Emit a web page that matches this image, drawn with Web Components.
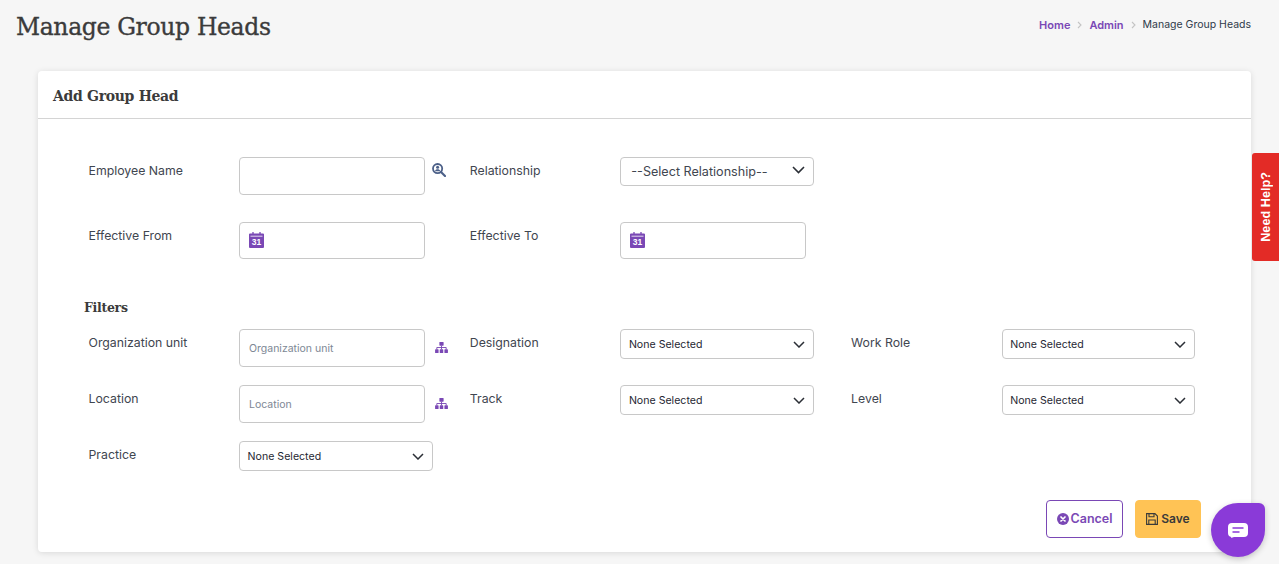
<!DOCTYPE html>
<html lang="en">
<head>
<meta charset="utf-8">
<title>Manage Group Heads</title>
<style>
  html, body { margin: 0; height: 100%; overflow: hidden; background: #f6f6f6; }
  body { font-family: Inter, "Noto Sans", sans-serif; color: #3a3f47; }
</style>
</head>
<body>
<gh-page>
  <gh-header slot="header" title="Manage Group Heads">
    <gh-crumb href>Home</gh-crumb>
    <gh-crumb href>Admin</gh-crumb>
    <gh-crumb>Manage Group Heads</gh-crumb>
  </gh-header>

  <gh-card heading="Add Group Head">
    <gh-row style="margin-bottom:27px">
      <gh-field label="Employee Name"><gh-input tall icon="search"></gh-input></gh-field>
      <gh-field label="Relationship"><gh-select big>--Select Relationship--</gh-select></gh-field>
    </gh-row>
    <gh-row>
      <gh-field label="Effective From"><gh-input date></gh-input></gh-field>
      <gh-field label="Effective To"><gh-input date></gh-input></gh-field>
    </gh-row>

    <gh-subhead>Filters</gh-subhead>

    <gh-row style="margin-bottom:18px">
      <gh-field label="Organization unit"><gh-input tall placeholder="Organization unit" icon="org"></gh-input></gh-field>
      <gh-field label="Designation"><gh-select>None Selected</gh-select></gh-field>
      <gh-field label="Work Role"><gh-select>None Selected</gh-select></gh-field>
    </gh-row>
    <gh-row style="margin-bottom:18px">
      <gh-field label="Location"><gh-input tall placeholder="Location" icon="org"></gh-input></gh-field>
      <gh-field label="Track"><gh-select>None Selected</gh-select></gh-field>
      <gh-field label="Level"><gh-select>None Selected</gh-select></gh-field>
    </gh-row>
    <gh-row>
      <gh-field label="Practice"><gh-select>None Selected</gh-select></gh-field>
    </gh-row>

    <gh-actions slot="footer">
      <gh-button kind="cancel">Cancel</gh-button>
      <gh-button kind="save">Save</gh-button>
    </gh-actions>
  </gh-card>
</gh-page>
<gh-help>Need Help?</gh-help>
<gh-chat></gh-chat>

<script>
  // small helper so every element sets up its shadow root the same way
  function shadow(el, html) {
    el.attachShadow({ mode: 'open' }).innerHTML = html;
  }

  const ICONS = {
    search: `<svg width="14" height="14" viewBox="0 0 14 14"><circle cx="5.6" cy="5.6" r="4.6" fill="none" stroke="#4c6088" stroke-width="1.8"/><circle cx="5.6" cy="4.3" r="1.5" fill="#4c6088"/><path d="M3 8.2c.3-1.5 1.3-2 2.6-2s2.3.5 2.6 2z" fill="#4c6088"/><path d="M9 9l4 4" stroke="#4c6088" stroke-width="2.2" stroke-linecap="round"/></svg>`,
    org: `<svg width="13" height="11" viewBox="0 0 14 12"><g fill="#7a48b5"><rect x="4.7" y="0" width="4.6" height="4" rx=".6"/><rect x="0" y="8" width="3.8" height="4" rx=".6"/><rect x="5.1" y="8" width="3.8" height="4" rx=".6"/><rect x="10.2" y="8" width="3.8" height="4" rx=".6"/></g><path d="M7 4v4M1.9 8V6h10.2v2" fill="none" stroke="#7a48b5" stroke-width="1"/></svg>`,
    calendar: `<svg width="15" height="16" viewBox="0 0 15 16"><path d="M4 0v3M11 0v3" stroke="#7a48b5" stroke-width="1.3"/><path d="M1 1.4h13a1 1 0 0 1 1 1V15a1 1 0 0 1-1 1H1a1 1 0 0 1-1-1V2.4a1 1 0 0 1 1-1z" fill="#7a48b5"/><path d="M1.5 4.2h12" stroke="#fff" stroke-width=".8"/><text x="7.5" y="13.2" text-anchor="middle" font-family="Liberation Sans, sans-serif" font-size="8.5" font-weight="700" fill="#fff">31</text></svg>`,
    cancel: `<svg width="12" height="12" viewBox="0 0 12 12"><circle cx="6" cy="6" r="6" fill="#7a48b5"/><path d="M4 4l4 4M8 4l-4 4" stroke="#fff" stroke-width="1.7" stroke-linecap="round"/></svg>`,
    save: `<svg width="12" height="12" viewBox="0 0 12 12" fill="none" stroke="#3a3a3a" stroke-width="1.1"><path d="M.6.6h8.3l2.5 2.5v8.3H.6z"/><path d="M3 .8v3h5v-3M2.8 11.2V7h6.4v4.2"/></svg>`
  };

  class GhPage extends HTMLElement {
    constructor() {
      super();
      shadow(this, `
        <style>
          :host { display: block; }
          .content { padding: 0 28px 0 38px; }
        </style>
        <slot name="header"></slot>
        <div class="content"><slot></slot></div>
      `);
    }
  }

  class GhHeader extends HTMLElement {
    constructor() {
      super();
      shadow(this, `
        <style>
          :host { display: flex; justify-content: space-between; align-items: center;
                  height: 54px; margin-bottom: 17px; padding: 0 28px 0 16px; }
          h1 { margin: 0; font: 400 23.5px/32px "DejaVu Serif", "Liberation Serif", serif; color: #3b3b3b;
               letter-spacing: -.35px; -webkit-text-stroke: .35px #3b3b3b; }
          nav { display: flex; align-items: center; margin-top: -5px; }
        </style>
        <h1>${this.getAttribute('title')}</h1>
        <nav><slot></slot></nav>
      `);
      this.removeAttribute('title');
    }
  }

  class GhCrumb extends HTMLElement {
    constructor() {
      super();
      const link = this.hasAttribute('href');
      shadow(this, `
        <style>
          :host { display: inline-flex; align-items: center; font: ${link ? 600 : 400} ${link ? 11 : 10.5}px/16px Inter, sans-serif; color: ${link ? '#7a48b5' : '#2f3a4a'}; }
          svg { margin: 0 7px; }
        </style>
        <slot></slot>
        ${link ? '<svg width="5" height="8" viewBox="0 0 5 8"><path d="M1 1l3 3-3 3" fill="none" stroke="#c4c4c4" stroke-width="1.1"/></svg>' : ''}
      `);
    }
  }

  class GhCard extends HTMLElement {
    constructor() {
      super();
      shadow(this, `
        <style>
          :host { display: block; height: 481px; box-sizing: border-box; background: #fff; border-radius: 4px;
                  box-shadow: 0 1px 6px rgba(0,0,0,.12); }
          header { height: 48px; box-sizing: border-box; border-bottom: 1px solid #d4d4d4; padding-left: 15px;
                   font: 700 14px/50px "DejaVu Serif", serif; color: #3b3b3b; letter-spacing: -.32px; }
          .body { padding: 38px 0 0 50px; height: 343px; }
          .foot { padding-right: 50px; }
        </style>
        <header>${this.getAttribute('heading')}</header>
        <div class="body"><slot></slot></div>
        <div class="foot"><slot name="footer"></slot></div>
      `);
    }
  }

  class GhRow extends HTMLElement {
    constructor() {
      super();
      shadow(this, `
        <style>
          :host { display: grid; grid-template-columns: repeat(3, 381.3px); }
        </style>
        <slot></slot>
      `);
    }
  }

  class GhField extends HTMLElement {
    constructor() {
      super();
      shadow(this, `
        <style>
          :host { display: grid; grid-template-columns: 151px 1fr; align-items: start; }
          label { font: 400 12.3px/20px Inter, sans-serif; color: #3f4650; padding: 4px 0 0 .5px; }
        </style>
        <label>${this.getAttribute('label')}</label>
        <div><slot></slot></div>
      `);
    }
  }

  class GhInput extends HTMLElement {
    constructor() {
      super();
      const ph = this.getAttribute('placeholder') || '';
      const icon = this.getAttribute('icon');
      const date = this.hasAttribute('date');
      shadow(this, `
        <style>
          :host { display: flex; align-items: flex-start; }
          .box { width: 186px; height: ${this.hasAttribute('tall') ? 38 : 37}px; box-sizing: border-box;
                 border: 1px solid #c8c8c8; border-radius: 4px; background: #fff;
                 display: flex; align-items: center; padding-left: 9px;
                 font: 400 10.5px/16px Inter, sans-serif; color: #7d8794; }
          .box svg { display: block; margin-bottom: 1px; }
          .box span { padding-top: 2px; }
          .side { margin-left: ${icon === 'org' ? 10 : 7}px; margin-top: ${icon === 'org' ? 13 : 6}px; line-height: 0; }
        </style>
        <div class="box">${date ? ICONS.calendar : `<span>${ph}</span>`}</div>
        ${icon ? `<div class="side">${ICONS[icon]}</div>` : ''}
      `);
    }
  }

  class GhSelect extends HTMLElement {
    constructor() {
      super();
      const big = this.hasAttribute('big');
      shadow(this, `
        <style>
          :host { display: flex; align-items: center; justify-content: space-between; box-sizing: border-box;
                  width: 193.6px; height: ${big ? 29 : 30}px; border: 1px solid #c8c8c8; border-radius: 4px; background: #fff;
                  padding: 0 8px 0 ${big ? 10 : 7.6}px;
                  font: 400 ${big ? 12.6 : 10.6}px/16px Inter, sans-serif; color: ${big ? '#3f4650' : '#1f2733'}; }
          span { padding-top: ${big ? 0 : 2}px; }
          svg { display: block; margin-top: ${big ? -3 : 1}px; }
        </style>
        <span><slot></slot></span>
        ${big
          ? '<svg width="13" height="8" viewBox="0 0 13 8"><path d="M1 1l5.5 5.5L12 1" fill="none" stroke="#2b2f36" stroke-width="1.6"/></svg>'
          : '<svg width="12" height="7" viewBox="0 0 12 7"><path d="M1 1l5 5 5-5" fill="none" stroke="#2b2f36" stroke-width="1.5"/></svg>'}
      `);
    }
  }

  class GhSubhead extends HTMLElement {
    constructor() {
      super();
      shadow(this, `
        <style>
          :host { display: block; margin: 40px 0 12px -4px; font: 700 12.5px/18px "DejaVu Serif", serif; color: #3b3b3b; letter-spacing: -.3px; }
        </style>
        <slot></slot>
      `);
    }
  }

  class GhActions extends HTMLElement {
    constructor() {
      super();
      shadow(this, `
        <style>
          :host { display: flex; justify-content: flex-end; gap: 12px; }
        </style>
        <slot></slot>
      `);
    }
  }

  class GhButton extends HTMLElement {
    constructor() {
      super();
      const save = this.getAttribute('kind') === 'save';
      shadow(this, `
        <style>
          :host { display: inline-flex; align-items: center; justify-content: center; gap: ${save ? 3 : 2}px; box-sizing: border-box;
                  width: ${save ? 66 : 77}px; height: 38px; border-radius: 4px;
                  border: 1px solid ${save ? '#ffc355' : '#7a48b5'}; background: ${save ? '#ffc355' : '#fff'};
                  font: 600 ${save ? 12 : 12.5}px/16px Inter, sans-serif; color: ${save ? '#3a3a3a' : '#7a48b5'}; }
          svg { display: block; }
        </style>
        ${save ? ICONS.save : ICONS.cancel}
        <slot></slot>
      `);
    }
  }

  class GhHelp extends HTMLElement {
    constructor() {
      super();
      shadow(this, `
        <style>
          :host { position: fixed; right: 0; top: 153px; width: 27px; height: 108px; background: #e32b26;
                  border-radius: 3px 0 0 3px; display: flex; align-items: center; justify-content: center;
                  font: 700 12.7px/16px "Liberation Sans", sans-serif; color: #fff; }
          span { writing-mode: vertical-rl; transform: rotate(180deg); }
        </style>
        <span><slot></slot></span>
      `);
    }
  }

  class GhChat extends HTMLElement {
    constructor() {
      super();
      shadow(this, `
        <style>
          :host { position: fixed; left: 1211px; top: 503px; width: 54px; height: 54px; background: #8a3ad8;
                  border-radius: 50% 6px 50% 50%; display: flex; align-items: center; justify-content: center;
                  box-shadow: 0 2px 6px rgba(0,0,0,.2); }
          svg { display: block; }
        </style>
        <svg width="20" height="15" viewBox="0 0 20 15"><path d="M4 0h12a4 4 0 0 1 4 4v6a4 4 0 0 1-4 4H6l-3 1 .3-1.1A4 4 0 0 1 0 10V4a4 4 0 0 1 4-4z" fill="#fff"/><path d="M4.5 5h11M4.5 9h7" stroke="#8a3ad8" stroke-width="1.4"/></svg>
      `);
    }
  }

  customElements.define('gh-page', GhPage);
  customElements.define('gh-header', GhHeader);
  customElements.define('gh-crumb', GhCrumb);
  customElements.define('gh-card', GhCard);
  customElements.define('gh-row', GhRow);
  customElements.define('gh-field', GhField);
  customElements.define('gh-input', GhInput);
  customElements.define('gh-select', GhSelect);
  customElements.define('gh-subhead', GhSubhead);
  customElements.define('gh-actions', GhActions);
  customElements.define('gh-button', GhButton);
  customElements.define('gh-help', GhHelp);
  customElements.define('gh-chat', GhChat);
</script>
</body>
</html>
